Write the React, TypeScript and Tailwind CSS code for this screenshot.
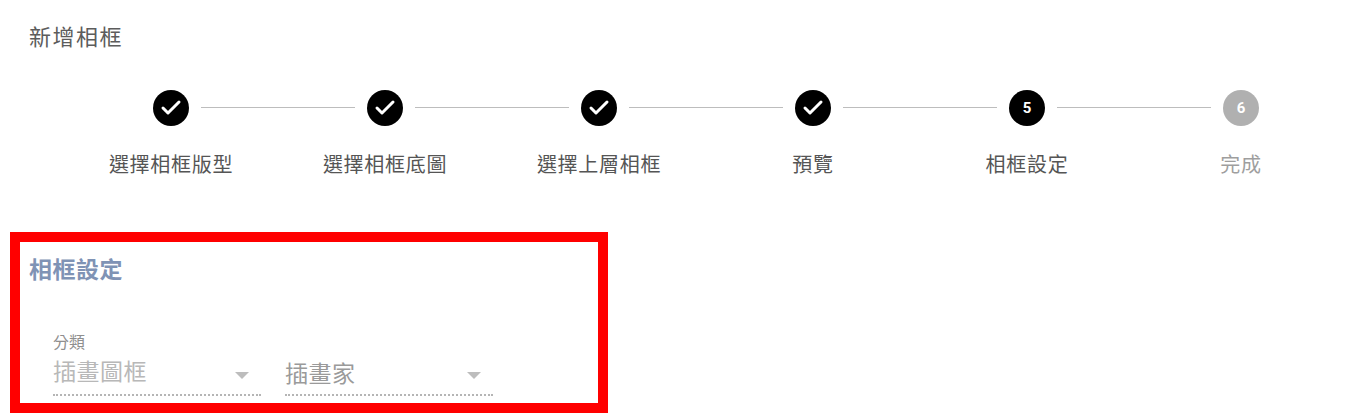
import { Check } from 'lucide-react';

const font = { fontFamily: '"Roboto", "Noto Sans CJK TC", sans-serif' };

const steps = [
  { label: '選擇相框版型', state: 'done' },
  { label: '選擇相框底圖', state: 'done' },
  { label: '選擇上層相框', state: 'done' },
  { label: '預覽', state: 'done' },
  { label: '相框設定', state: 'active' },
  { label: '完成', state: 'todo' },
];

function Select({ value, className }: { value: string; className: string }) {
  return (
    <div className="w-[208px] h-[38px] flex items-start justify-between border-b-2 border-dotted border-[#b5b5b5]">
      <span className={`text-[23px] leading-[30px] tracking-[0.5px] ${className}`}>{value}</span>
      <span className="mt-[14px] mr-[12px] w-0 h-0 border-x-[7px] border-x-transparent border-t-[7px] border-t-[#bdbdbd]" />
    </div>
  );
}

export default function App() {
  return (
    <div className="w-[1366px] h-[417px] bg-white overflow-hidden" style={font}>
      <h1 className="pl-[29px] pt-[23px] text-[22px] leading-[29px] tracking-[1.5px] text-[#5c5c5c] font-normal">新增相框</h1>

      <div className="mt-[38px] ml-[64px] flex">
        {steps.map((step, i) => (
          <div key={step.label} className="w-[214px] flex flex-col items-center relative">
            {i < steps.length - 1 && (
              <div className="absolute left-[137px] top-[17px] w-[154px] h-[1px] bg-[#bdbdbd]" />
            )}
            <div
              className={
                'w-9 h-9 rounded-full flex items-center justify-center text-white text-[15px] font-bold ' +
                (step.state === 'todo' ? 'bg-[#b0b0b0]' : 'bg-black')
              }
            >
              {step.state === 'done' ? <Check size={24} strokeWidth={3} /> : i + 1}
            </div>
            <div
              className={
                'mt-[25px] text-[20px] leading-[28px] tracking-[0.7px] ' +
                (step.state === 'todo' ? 'text-[#9e9e9e]' : 'text-[#555555]')
              }
            >
              {step.label}
            </div>
          </div>
        ))}
      </div>

      <div className="mt-[53px] ml-[10px] w-[598px] h-[181px] border-[10px] border-[#ff0000]">
        <h2 className="ml-[9px] mt-[14px] text-[23px] leading-[30px] tracking-[0.5px] font-bold text-[#7f93b5]">相框設定</h2>
        <div className="ml-[33px] mt-[46px] text-[16px] leading-[22px] text-[#8f8f8f]">分類</div>
        <div className="ml-[33px] mt-[4px] flex gap-[24px]">
          <Select value="插畫圖框" className="text-[#b8b8b8]" />
          <Select value="插畫家" className="text-[#9a9a9a] pt-[2px]" />
        </div>
      </div>
    </div>
  );
}
